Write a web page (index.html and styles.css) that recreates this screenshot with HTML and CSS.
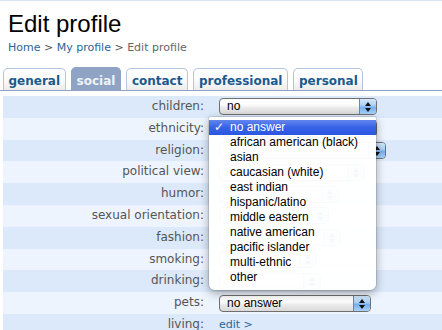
FILE: index.html
```html
<!DOCTYPE html>
<html>
<head>
<meta charset="utf-8">
<link rel="stylesheet" href="styles.css">
</head>
<body>
<header class="head">
  <h1 class="title">Edit profile</h1>
  <nav class="crumbs"><a class="crumb-link">Home</a> &gt; <a class="crumb-link">My profile</a> &gt; <span class="crumb-here">Edit profile</span></nav>
</header>
<div class="tabs">
  <a class="tab">general</a>
  <a class="tab tab-active">social</a>
  <a class="tab">contact</a>
  <a class="tab">professional</a>
  <a class="tab">personal</a>
</div>
<div class="form">
  <div class="row"><div class="label">children:</div><div class="value"><span class="select w-children"><span class="sel-text">no</span><span class="sel-btn"></span></span></div></div>
  <div class="row"><div class="label">ethnicity:</div><div class="value"><span class="select w-children"><span class="sel-text"></span><span class="sel-btn"></span></span></div></div>
  <div class="row"><div class="label">religion:</div><div class="value"><span class="select w-religion"><span class="sel-text"></span><span class="sel-btn"></span></span></div></div>
  <div class="row"><div class="label">political view:</div><div class="value"><span class="select w-political"><span class="sel-text"></span><span class="sel-btn"></span></span></div></div>
  <div class="row"><div class="label">humor:</div><div class="value"><span class="select w-humor"><span class="sel-text"></span><span class="sel-btn"></span></span></div></div>
  <div class="row"><div class="label">sexual orientation:</div><div class="value"><span class="select w-orient"><span class="sel-text"></span><span class="sel-btn"></span></span></div></div>
  <div class="row"><div class="label">fashion:</div><div class="value"><span class="select w-fashion"><span class="sel-text"></span><span class="sel-btn"></span></span></div></div>
  <div class="row"><div class="label">smoking:</div><div class="value"><span class="select w-smoking"><span class="sel-text"></span><span class="sel-btn"></span></span></div></div>
  <div class="row"><div class="label">drinking:</div><div class="value"><span class="select w-drinking"><span class="sel-text"></span><span class="sel-btn"></span></span></div></div>
  <div class="row"><div class="label">pets:</div><div class="value"><span class="select w-pets"><span class="sel-text">no answer</span><span class="sel-btn"></span></span></div></div>
  <div class="row"><div class="label">living:</div><div class="value"><a class="edit-link">edit &gt;</a></div></div>

  <ul class="menu">
    <li class="item item-on"><span class="check">✓</span>no answer</li>
    <li class="item">african american (black)</li>
    <li class="item">asian</li>
    <li class="item">caucasian (white)</li>
    <li class="item">east indian</li>
    <li class="item">hispanic/latino</li>
    <li class="item">middle eastern</li>
    <li class="item">native american</li>
    <li class="item">pacific islander</li>
    <li class="item">multi-ethnic</li>
    <li class="item">other</li>
  </ul>
</div>
</body>
</html>
```

FILE: styles.css
```css
html, body {
  margin: 0;
  padding: 0;
}
body {
  border-top: 1px solid #d7e3f2;
  background: #fff;
  font-family: "DejaVu Sans", Verdana, sans-serif;
  overflow: hidden;
}
.head {
  padding: 9px 0 0 8px;
}
.title {
  margin: 0;
  font-family: "Liberation Sans", Arial, sans-serif;
  font-weight: normal;
  font-size: 24px;
  line-height: 28px;
  color: #000;
}
.crumbs {
  margin-top: 3px;
  font-size: 11px;
  line-height: 14px;
  color: #555;
}
.crumb-link {
  color: #2a6599;
}
.crumb-here {
  color: #666;
}
.tabs {
  margin-top: 12px;
  display: flex;
  align-items: flex-end;
  gap: 5.5px;
  padding-left: 3px;
  border-bottom: 1px solid #8ea3c0;
}
.tab {
  box-sizing: border-box;
  height: 22px;
  padding: 4px 4.5px 0;
  border: 1px solid #b4c6de;
  border-bottom: none;
  border-radius: 5px 5px 0 0;
  background: linear-gradient(#ffffff, #fbfbfb 50%, #ececec);
  font-weight: bold;
  font-size: 12px;
  line-height: 16px;
  color: #1b5a8e;
}
.tab-active {
  height: 23px;
  padding-top: 5px;
  background: #8fa4c4;
  border-color: #8fa4c4;
  color: #eef2f8;
}
.form {
  position: relative;
  margin: 5px 0 0 3px;
}
.row {
  display: flex;
  height: 21.8px;
  align-items: center;
  background: #dbe9fa;
}
.row:nth-child(even) {
  background: #edf4fd;
}
.label {
  width: 201px;
  flex: none;
  text-align: right;
  font-size: 12px;
  line-height: 21.8px;
  color: #555;
}
.value {
  padding-left: 15px;
  display: flex;
  align-items: center;
}
.select {
  box-sizing: border-box;
  display: flex;
  height: 17px;
  border: 1px solid #6f6f6f;
  border-radius: 4px;
  background: linear-gradient(#ffffff, #fbfbfb 40%, #e9e9e9 60%, #d9d9d9);
  overflow: hidden;
}
.sel-text {
  flex: 1;
  padding-left: 7px;
  font-family: "Liberation Sans", Arial, sans-serif;
  font-size: 12px;
  line-height: 15px;
  color: #000;
}
.sel-btn {
  position: relative;
  width: 16px;
  flex: none;
  border-left: 1px solid #6f86a8;
  background: linear-gradient(#d6e8fb, #a9cdf3 45%, #75aeee 55%, #a8d2fa);
}
.sel-btn::before,
.sel-btn::after {
  content: "";
  position: absolute;
  left: 5px;
  border-left: 3px solid transparent;
  border-right: 3px solid transparent;
}
.sel-btn::before {
  top: 3px;
  border-bottom: 4px solid #111;
}
.sel-btn::after {
  top: 9px;
  border-top: 4px solid #111;
}
.w-children { width: 158px; }
.w-religion { width: 167px; }
.w-political { width: 146px; }
.w-humor { width: 120px; }
.w-orient { width: 110px; }
.w-fashion { width: 122px; }
.w-smoking { width: 98px; }
.w-drinking { width: 102px; }
.w-pets { width: 152px; }
.edit-link {
  font-size: 11px;
  line-height: 21.8px;
  color: #2a6599;
}
.menu {
  position: absolute;
  left: 206px;
  top: 21px;
  width: 167px;
  margin: 0;
  padding: 3px 0 5px;
  list-style: none;
  background: rgba(255, 255, 255, 0.97);
  border-radius: 2px 2px 6px 6px;
  box-shadow: 0 0 0 1px rgba(0, 0, 0, 0.1), 0 3px 10px rgba(0, 0, 0, 0.35);
}
.item {
  position: relative;
  height: 15px;
  padding-left: 21px;
  font-family: "Liberation Sans", Arial, sans-serif;
  font-size: 12px;
  line-height: 15px;
  color: #000;
  white-space: nowrap;
}
.item-on {
  background: linear-gradient(#6286ee, #3862e6 50%, #2a56e2);
  color: #fff;
}
.check {
  position: absolute;
  left: 5px;
  top: 0;
  font-family: "DejaVu Sans", sans-serif;
  font-size: 12px;
  font-weight: bold;
}
```
